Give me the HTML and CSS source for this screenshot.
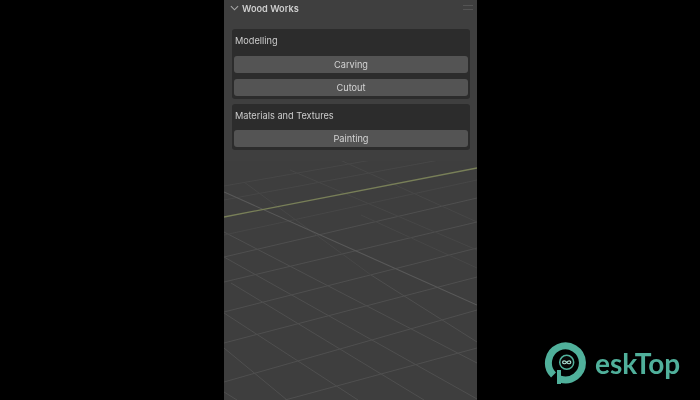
FILE: index.html
```html
<!DOCTYPE html>
<html lang="en">
<head>
    <meta charset="UTF-8">
    <meta name="viewport" content="width=device-width, initial-scale=1.0">
    <title>Wood Works</title>
    <link rel="stylesheet" href="styles.css">
</head>
<body>
    <div class="stage">
        <svg class="floor" viewBox="224 0 253 400" width="253" height="400">
            <g class="grid">
                <line x1="224" y1="382" x2="477" y2="310"/>
                <line x1="224" y1="343" x2="477" y2="277"/>
                <line x1="224" y1="312" x2="477" y2="248"/>
                <line x1="224" y1="282" x2="477" y2="222"/>
                <line x1="224" y1="257" x2="477" y2="198"/>
                <line x1="285" y1="400" x2="477" y2="348"/>
                <line x1="224" y1="313" x2="358" y2="400"/>
                <line x1="231" y1="283" x2="424" y2="400"/>
                <line x1="224" y1="257" x2="477" y2="399"/>
                <line x1="224" y1="348" x2="287" y2="400"/>
                <line x1="224" y1="392" x2="237" y2="400"/>
                <line x1="371" y1="275" x2="477" y2="342"/>
                <line x1="224" y1="232" x2="477" y2="363"/>
            </g>
            <g class="grid faint">
                <line x1="224" y1="235" x2="477" y2="180"/>
                <line x1="224" y1="200" x2="477" y2="153"/>
                <line x1="224" y1="186" x2="400" y2="155"/>
                <line x1="244" y1="182" x2="371" y2="275"/>
                <line x1="361" y1="215" x2="477" y2="268"/>
                <line x1="290" y1="170" x2="477" y2="250"/>
                <line x1="340" y1="160" x2="477" y2="222"/>
            </g>
            <line class="major" x1="224" y1="192" x2="477" y2="305"/>
            <line class="axis" x1="224" y1="217" x2="477" y2="168"/>
        </svg>

        <div class="panel">
            <div class="panel-head">
                <svg class="chevron" viewBox="0 0 10 6" width="9" height="6">
                    <polyline points="1,1 5,5 9,1"/>
                </svg>
                <span class="panel-title">Wood Works</span>
                <span class="grip"></span>
            </div>
            <div class="box">
                <div class="box-label">Modelling</div>
                <div class="box-buttons">
                    <button>Carving</button>
                    <button>Cutout</button>
                </div>
            </div>
            <div class="box">
                <div class="box-label second">Materials and Textures</div>
                <div class="box-buttons">
                    <button>Painting</button>
                </div>
            </div>
        </div>
    </div>

    <div class="watermark">
        <svg class="logo" viewBox="0 0 44 46" width="44" height="46">
            <path class="logo-ring" d="M9.5 35 A17 17 0 1 1 16 39"/>
            <path class="logo-stem" d="M15 30 V44"/>
            <circle class="logo-eye" cx="22.7" cy="22.3" r="7"/>
            <path class="logo-loop" d="M22.7 22.3 C21.2 20.3 18.6 20.5 18.6 22.3 C18.6 24.1 21.2 24.3 22.7 22.3 C24.2 20.3 26.8 20.5 26.8 22.3 C26.8 24.1 24.2 24.3 22.7 22.3 Z"/>
        </svg>
        <span class="watermark-text">eskTop</span>
    </div>
</body>
</html>
```

FILE: styles.css
```css
* {
    box-sizing: border-box;
    margin: 0;
    padding: 0;
}

body {
    background: #000;
    font-family: Inter, "Liberation Sans", sans-serif;
    width: 700px;
    height: 400px;
    overflow: hidden;
}

.stage {
    position: relative;
    width: 253px;
    height: 400px;
    margin-left: 224px;
    background: #3e3e3e;
}

.floor {
    position: absolute;
    top: 0;
    left: 0;
    filter: blur(0.5px);
}

.grid {
    stroke: #4f4f4f;
    stroke-width: 1;
}

.grid.faint {
    stroke: #474747;
}

.major {
    stroke: #595959;
    stroke-width: 1.1;
}

.axis {
    stroke: #787f58;
    stroke-width: 1.3;
}

.panel {
    position: relative;
    padding: 0 7px 6px 8px;
    background: #3f3f3f;
    filter: blur(0.5px);
}

.panel-head {
    display: flex;
    align-items: center;
    height: 16px;
    margin: 0 -3px 13px -2px;
}

.chevron {
    margin-right: 3px;
}

.chevron polyline {
    fill: none;
    stroke: #a8a8a8;
    stroke-width: 1.2;
}

.panel-title {
    flex: 1;
    color: #cfcfcf;
    font-size: 9.2px;
    font-weight: 600;
}

.grip {
    width: 10px;
    height: 5px;
    margin-top: -1px;
    border-top: 1px solid #545454;
    border-bottom: 1px solid #545454;
}

.box {
    margin-bottom: 5px;
    padding: 0 2px 3px;
    background: #2c2c2c;
    border-radius: 3px;
}

.box-label {
    display: flex;
    align-items: center;
    height: 27px;
    padding: 0 1px 4px;
    color: #cccccc;
    font-size: 9.2px;
}

.box-label.second {
    height: 26px;
}

.box-buttons {
    display: flex;
    flex-direction: column;
    gap: 6px;
}

button {
    height: 17px;
    padding-bottom: 1px;
    border: none;
    border-radius: 3px;
    background: #545454;
    color: #d4d4d4;
    font-family: Inter, "Liberation Sans", sans-serif;
    font-size: 9.2px;
}

.watermark {
    position: absolute;
    top: 340px;
    left: 544px;
    display: flex;
    align-items: center;
    gap: 7px;
    filter: blur(0.3px);
}

.logo-ring,
.logo-stem {
    fill: none;
    stroke: #50b09b;
}

.logo-ring {
    stroke-width: 7;
}

.logo-stem {
    stroke-width: 4;
}

.logo-eye {
    fill: #060606;
    stroke: #50b09b;
    stroke-width: 1.5;
}

.logo-loop {
    fill: none;
    stroke: #a9ddd1;
    stroke-width: 1.2;
}

.watermark-text {
    color: #50b09b;
    font-family: Lato, sans-serif;
    font-size: 28px;
    font-weight: 700;
}
```
